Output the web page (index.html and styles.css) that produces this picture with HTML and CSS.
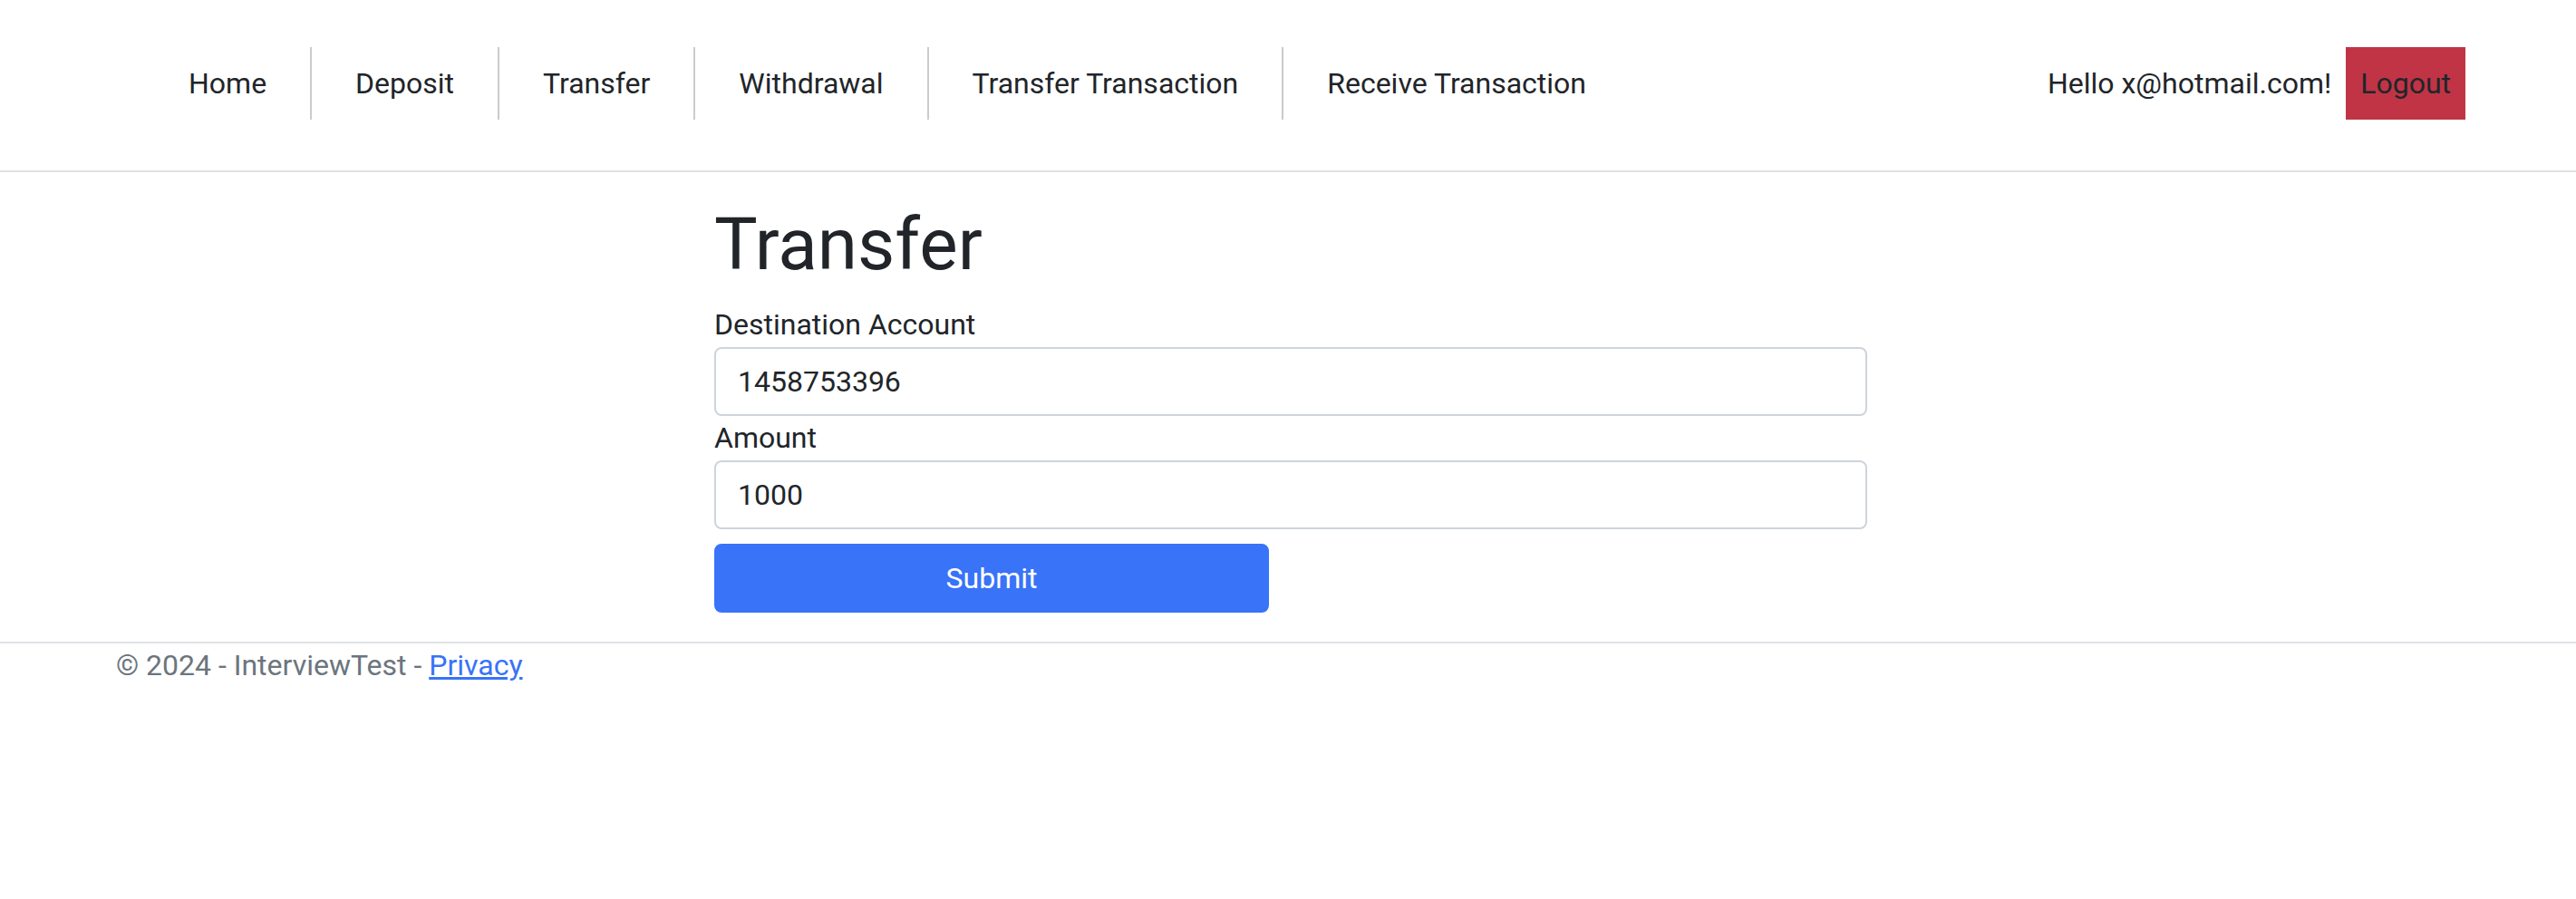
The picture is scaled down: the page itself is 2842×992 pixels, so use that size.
FILE: index.html
```html
<!DOCTYPE html>
<html lang="en">
<head>
<meta charset="utf-8">
<title>Transfer - InterviewTest</title>
<link rel="stylesheet" href="styles.css">
</head>
<body>
<header class="site-header">
  <div class="container header-inner">
    <nav class="main-nav">
      <a class="nav-link sep" href="#">Home</a>
      <a class="nav-link sep" href="#">Deposit</a>
      <a class="nav-link sep" href="#">Transfer</a>
      <a class="nav-link sep" href="#">Withdrawal</a>
      <a class="nav-link sep" href="#">Transfer Transaction</a>
      <a class="nav-link" href="#">Receive Transaction</a>
    </nav>
    <div class="user-nav">
      <span class="hello">Hello x@hotmail.com!</span>
      <a class="logout" href="#">Logout</a>
    </div>
  </div>
</header>
<main class="container main">
  <div class="form-col">
    <h1 class="title">Transfer</h1>
    <form class="transfer-form">
      <label class="field-label" for="dest">Destination Account</label>
      <input class="form-control" id="dest" type="text" value="1458753396">
      <label class="field-label" for="amount">Amount</label>
      <input class="form-control" id="amount" type="text" value="1000">
      <div class="btn-row">
        <button class="btn-submit" type="button">Submit</button>
      </div>
    </form>
  </div>
</main>
<footer class="footer">
  <div class="container">&copy; 2024 - InterviewTest - <a class="footer-link" href="#">Privacy</a></div>
</footer>
</body>
</html>
```
FILE: styles.css
```css
* { box-sizing: border-box; }
html, body { margin: 0; padding: 0; }
body {
  font-family: Roboto, "Liberation Sans", Arial, sans-serif;
  font-size: 32px;
  line-height: 1.5;
  color: #212529;
  background: #fff;
}
.container {
  width: 2640px;
  margin-left: 104px;
  padding: 0 24px;
}
.site-header {
  padding: 52px 0 56px;
  border-bottom: 2px solid #dee2e6;
}
.header-inner {
  display: flex;
  justify-content: space-between;
  align-items: center;
}
.main-nav {
  display: flex;
  margin-left: 32px;
}
.nav-link {
  display: block;
  height: 80px;
  padding: 16px 48px;
  color: #212529;
  text-decoration: none;
}
.nav-link.sep { border-right: 2px solid #cbcbcb; }
.user-nav {
  display: flex;
  align-items: center;
}
.hello {
  padding: 16px 16px;
  color: #212529;
}
.logout {
  display: block;
  height: 80px;
  padding: 16px;
  background: #c03446;
  color: #212529;
  text-decoration: none;
}
.main {
  margin-top: 32px;
}
.form-col {
  width: 1272px;
  margin-left: 660px;
}
.title {
  margin: 0 0 16px;
  font-size: 80px;
  font-weight: 400;
  line-height: 1.2;
}
.transfer-form {
  display: flex;
  flex-direction: column;
}
.field-label {
  display: block;
  margin-bottom: 1px;
}
.form-control {
  display: block;
  width: 100%;
  height: 76px;
  padding: 12px 24px;
  font-family: inherit;
  font-size: 32px;
  line-height: 1.5;
  color: #212529;
  background: #fff;
  border: 2px solid #ced4da;
  border-radius: 8px;
  margin: 0;
  outline: none;
}
.btn-row {
  margin-top: 16px;
}
.btn-submit {
  display: block;
  width: 612px;
  height: 76px;
  padding: 12px 24px;
  font-family: inherit;
  font-size: 32px;
  line-height: 1.5;
  color: #fff;
  background: #3873f8;
  border: 2px solid #3873f8;
  border-radius: 8px;
}
.footer {
  margin-top: 32px;
  border-top: 2px solid #dee2e6;
  color: #6c757d;
  white-space: nowrap;
}
.footer-link {
  color: #3873f8;
  text-decoration: underline;
}
```
